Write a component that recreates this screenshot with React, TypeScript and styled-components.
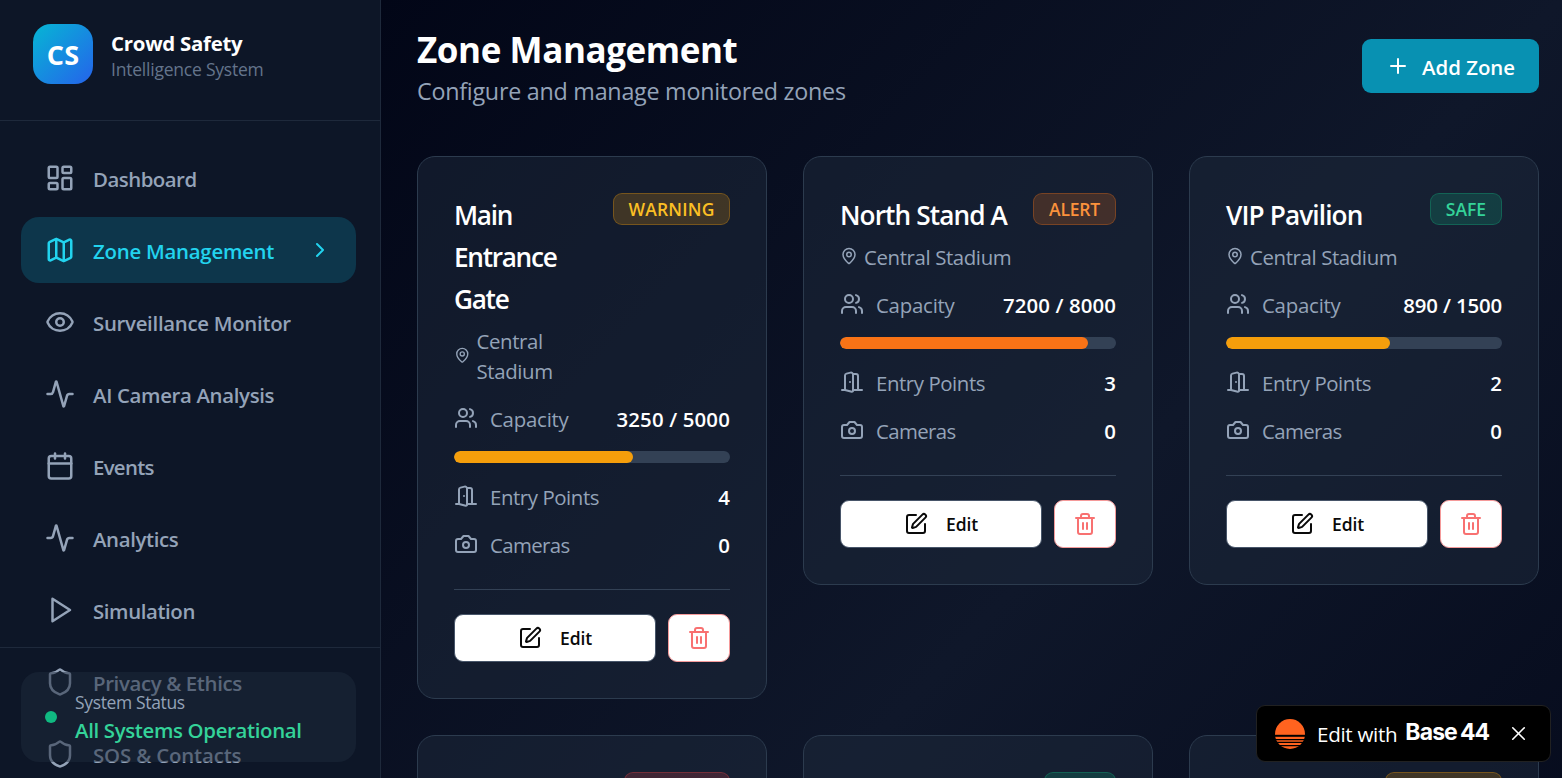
import React from "react";
import styled, { createGlobalStyle, css } from "styled-components";
import {
  Activity,
  Calendar,
  ChevronRight,
  Eye,
  LayoutDashboard,
  Map,
  Plus,
  Shield,
  SquarePen,
  Trash2,
  Users,
  X,
} from "lucide-react";

const GlobalStyle = createGlobalStyle`
  * {
    box-sizing: border-box;
  }
  body {
    margin: 0;
    overflow: hidden;
    background: #020617;
    font-family: "Open Sans", "Noto Sans", sans-serif;
  }
  svg {
    display: block;
  }
  button {
    font-family: inherit;
    margin: 0;
    cursor: pointer;
  }
`;

const Page = styled.div`
  position: relative;
  display: flex;
  width: 1562px;
  height: 778px;
  overflow: hidden;
`;

const Sidebar = styled.aside`
  position: relative;
  flex: none;
  width: 381px;
  height: 778px;
  overflow: hidden;
  background: #0d1627;
  border-right: 1px solid #1e293b;
`;

const Brand = styled.div`
  display: flex;
  align-items: center;
  gap: 18px;
  padding: 24px 24px 36px 33px;
  border-bottom: 1px solid #1e293b;
`;

const BrandMark = styled.div`
  display: flex;
  align-items: center;
  justify-content: center;
  width: 60px;
  height: 60px;
  border-radius: 18px;
  background: linear-gradient(to bottom right, #06b6d4, #2563eb);
  color: #fff;
  font-size: 27px;
  font-weight: 700;
  letter-spacing: 0.2px;
`;

const BrandName = styled.div`
  padding-top: 2px;
  color: #fff;
  font-size: 20.4px;
  line-height: 28px;
  font-weight: 700;
  letter-spacing: -0.25px;
`;

const BrandTagline = styled.div`
  padding-top: 1px;
  color: #64748b;
  font-size: 17.5px;
  line-height: 23px;
  letter-spacing: -0.22px;
`;

const Nav = styled.nav`
  display: flex;
  flex-direction: column;
  gap: 6px;
  padding: 24px 24px 0 21px;
`;

const NavItem = styled.a<{ $active?: boolean }>`
  display: flex;
  align-items: center;
  gap: 18px;
  height: 66px;
  padding: 0 24px;
  border-radius: 18px;
  color: #94a3b8;
  ${({ $active }) =>
    $active &&
    css`
      color: #22d3ee;
      background: #0d364b;
    `}
`;

const NavLabel = styled.span<{ $tracking?: number }>`
  flex: 1;
  padding-top: 2px;
  font-size: 20.4px;
  line-height: 28px;
  font-weight: 600;
  white-space: nowrap;
  letter-spacing: ${({ $tracking }) => $tracking ?? -0.3}px;
`;

const StatusArea = styled.div`
  position: absolute;
  left: 0;
  right: 0;
  bottom: 0;
  padding: 24px 24px 16px 21px;
  border-top: 1px solid #1e293b;
`;

const StatusCard = styled.div`
  display: flex;
  align-items: center;
  gap: 18px;
  height: 90px;
  padding: 0 24px;
  border-radius: 18px;
  background: rgba(30, 41, 59, 0.5);
`;

const StatusDot = styled.span`
  width: 12px;
  height: 12px;
  border-radius: 50%;
  background: #10b981;
`;

const StatusLabel = styled.div`
  padding-top: 1px;
  color: #94a3b8;
  font-size: 17.5px;
  line-height: 23px;
  letter-spacing: -0.35px;
`;

const StatusValue = styled.div`
  padding-top: 2px;
  color: #34d399;
  font-size: 20.4px;
  line-height: 28px;
  font-weight: 600;
  letter-spacing: -0.34px;
`;

const Main = styled.main`
  flex: none;
  width: 1181px;
  height: 1270px;
  padding: 24px 23px 0 36px;
  background: linear-gradient(to bottom right, #020617, #0f172a, #020617);
`;

const PageHeader = styled.header`
  display: flex;
  align-items: center;
  justify-content: space-between;
  margin-bottom: 48px;
`;

const PageTitle = styled.h1`
  margin: 0;
  padding-top: 3px;
  color: #fff;
  font-size: 35px;
  line-height: 45px;
  font-weight: 700;
  letter-spacing: -0.42px;
`;

const PageSubtitle = styled.p`
  margin: 0;
  padding-top: 3px;
  color: #94a3b8;
  font-size: 23.3px;
  line-height: 33px;
  letter-spacing: -0.25px;
`;

const AddButton = styled.button`
  display: flex;
  align-items: center;
  gap: 12px;
  width: 177px;
  height: 54px;
  padding: 0 0 0 24px;
  border: 0;
  border-radius: 9px;
  background: #0891b2;
  color: #fff;
  font-size: 20.4px;
  font-weight: 600;
  letter-spacing: 0;
  white-space: nowrap;

  span {
    padding-top: 2px;
  }
`;

const ZoneGrid = styled.section`
  display: grid;
  grid-template-columns: repeat(3, 1fr);
  gap: 36px;
  align-items: start;
`;

const Card = styled.article`
  min-height: 428px;
  padding: 36px;
  border: 1px solid #2c3b4e;
  border-radius: 18px;
  background: rgba(30, 41, 59, 0.5);
`;

const CardHeader = styled.div`
  display: flex;
  align-items: flex-start;
  justify-content: space-between;
  margin-bottom: 17px;
`;

const ZoneName = styled.h3<{ $tracking: number }>`
  margin: 0 0 6px;
  padding-top: 1px;
  color: #fff;
  font-size: 26.2px;
  line-height: 42px;
  font-weight: 600;
  letter-spacing: ${({ $tracking }) => $tracking}px;
`;

const Venue = styled.div`
  display: flex;
  align-items: center;
  gap: 6px;
  color: #94a3b8;
  font-size: 20.4px;
  line-height: 30px;
  letter-spacing: -0.38px;

  svg {
    flex: none;
    margin-top: -2px;
  }
`;

const badgeTones = {
  WARNING: { width: 117, rgb: "245, 158, 11", color: "#fbbf24", tracking: 0.2 },
  ALERT: { width: 83, rgb: "249, 115, 22", color: "#fb923c", tracking: -0.2 },
  SAFE: { width: 72, rgb: "16, 185, 129", color: "#34d399", tracking: 0 },
  CRITICAL: { width: 106, rgb: "239, 68, 68", color: "#f87171", tracking: 0 },
};

type Status = keyof typeof badgeTones;

const Badge = styled.span<{ $status: Status }>`
  flex: none;
  margin-left: auto;
  width: ${({ $status }) => badgeTones[$status].width}px;
  height: 32px;
  border: 1px solid rgba(${({ $status }) => badgeTones[$status].rgb}, 0.3);
  border-radius: 9px;
  background: rgba(${({ $status }) => badgeTones[$status].rgb}, 0.2);
  color: ${({ $status }) => badgeTones[$status].color};
  font-size: 17.5px;
  line-height: 31px;
  font-weight: 600;
  text-align: center;
  letter-spacing: ${({ $status }) => badgeTones[$status].tracking}px;
`;

const Stats = styled.div`
  display: flex;
  flex-direction: column;
  gap: 18px;
`;

const StatRow = styled.div`
  display: flex;
  align-items: center;
  gap: 12px;
  height: 30px;
  color: #94a3b8;
  font-size: 20.4px;
`;

const StatLabel = styled.span<{ $tracking: number }>`
  flex: 1;
  padding-top: 2px;
  letter-spacing: ${({ $tracking }) => $tracking}px;
`;

const StatValue = styled.span<{ $tracking?: number }>`
  padding-top: 2px;
  color: #fff;
  font-weight: 600;
  letter-spacing: ${({ $tracking }) => $tracking ?? 0}px;
`;

const Track = styled.div`
  height: 12px;
  border-radius: 6px;
  background: #334155;
  overflow: hidden;
`;

const Fill = styled.div<{ $color: string }>`
  height: 12px;
  border-radius: 6px;
  background: ${({ $color }) => $color};
`;

const CardActions = styled.div`
  display: flex;
  gap: 12px;
  margin-top: 30px;
  padding-top: 24px;
  border-top: 1px solid #334155;
`;

const EditButton = styled.button`
  display: flex;
  flex: 1;
  align-items: center;
  justify-content: center;
  gap: 18px;
  height: 48px;
  padding: 0;
  border: 1px solid #475569;
  border-radius: 9px;
  background: #fff;
  color: #0a0a0a;
  font-size: 17.5px;
  font-weight: 600;
  letter-spacing: -0.15px;
`;

const DeleteButton = styled.button`
  display: flex;
  align-items: center;
  justify-content: center;
  width: 62px;
  height: 48px;
  padding: 0;
  border: 1px solid #f59a9a;
  border-radius: 9px;
  background: #fff;
  color: #f87171;
`;

const EditBar = styled.div`
  position: absolute;
  right: 11px;
  bottom: 16px;
  display: flex;
  align-items: center;
  width: 295px;
  height: 57px;
  padding: 0 20px 0 18px;
  border: 1px solid #212121;
  border-radius: 9px;
  background: #000;
  color: #fff;
`;

const EditBarText = styled.span`
  margin-left: 12px;
  font-size: 20.6px;
  letter-spacing: -0.3px;
`;

const EditBarBrand = styled.span`
  flex: 1;
  margin-left: 8px;
  padding-bottom: 3px;
  font-family: Inter, sans-serif;
  font-size: 23px;
  font-weight: 700;
  letter-spacing: -0.9px;
  word-spacing: -1.5px;
  white-space: nowrap;
`;

const Outline: React.FC<{ size: number; children: React.ReactNode }> = ({
  size,
  children,
}) => (
  <svg
    width={size}
    height={size}
    viewBox="0 0 24 24"
    fill="none"
    stroke="currentColor"
    strokeWidth="2"
    strokeLinecap="round"
    strokeLinejoin="round"
  >
    {children}
  </svg>
);

const PlayIcon = ({ size = 24 }: { size?: number }) => (
  <Outline size={size}>
    <polygon points="6 3 20 12 6 21 6 3" />
  </Outline>
);

const PinIcon = ({ size = 24 }: { size?: number }) => (
  <Outline size={size}>
    <path d="M20 10c0 4.993-5.539 10.193-7.399 11.799a1 1 0 0 1-1.202 0C9.539 20.193 4 14.993 4 10a8 8 0 0 1 16 0" />
    <circle cx="12" cy="10" r="3" />
  </Outline>
);

const DoorIcon = () => (
  <Outline size={24}>
    <path d="M13 4h3a2 2 0 0 1 2 2v14" />
    <path d="M2 20h3" />
    <path d="M13 20h9" />
    <path d="M10 12v.01" />
    <path d="M13 4.562v16.157a1 1 0 0 1-1.242.97L5 20V5.562a2 2 0 0 1 1.515-1.94l4-1A2 2 0 0 1 13 4.561Z" />
  </Outline>
);

const CameraIcon = () => (
  <Outline size={24}>
    <path d="M14.5 4h-5L7 7H4a2 2 0 0 0-2 2v9a2 2 0 0 0 2 2h16a2 2 0 0 0 2-2V9a2 2 0 0 0-2-2h-3l-2.5-3z" />
    <circle cx="12" cy="13" r="3" />
  </Outline>
);

const SunLogo = () => (
  <svg width="30" height="30" viewBox="0 0 30 30">
    <circle cx="15" cy="15" r="15" fill="#ff631f" />
    <path d="M0 16.8h30" stroke="#000" strokeWidth="2" />
    <path d="M0 20.6h30M0 23.4h30M0 26.6h30" stroke="#000" strokeWidth="1.2" />
  </svg>
);

const navItems = [
  { label: "Dashboard", icon: LayoutDashboard, tracking: -0.5 },
  { label: "Zone Management", icon: Map, tracking: -0.25, active: true },
  { label: "Surveillance Monitor", icon: Eye },
  { label: "AI Camera Analysis", icon: Activity, tracking: -0.34 },
  { label: "Events", icon: Calendar, tracking: -0.7 },
  { label: "Analytics", icon: Activity, tracking: -0.36 },
  { label: "Simulation", icon: PlayIcon, tracking: -0.4 },
  { label: "Privacy & Ethics", icon: Shield, tracking: -0.36 },
  { label: "SOS & Contacts", icon: Shield, tracking: -0.15 },
];

interface Zone {
  name: string;
  tracking: number;
  status: Status;
  current: number;
  capacity: number;
  barColor: string;
  entryPoints: number;
  cameras: number;
  valueTracking: number;
  pinSize: number;
}

const zones: Zone[] = [
  {
    name: "Main Entrance Gate",
    tracking: -1.3,
    status: "WARNING",
    current: 3250,
    capacity: 5000,
    barColor: "#f59e0b",
    entryPoints: 4,
    cameras: 0,
    valueTracking: 0.15,
    pinSize: 16.5,
  },
  {
    name: "North Stand A",
    tracking: -0.9,
    status: "ALERT",
    current: 7200,
    capacity: 8000,
    barColor: "#f97316",
    entryPoints: 3,
    cameras: 0,
    valueTracking: 0.1,
    pinSize: 18,
  },
  {
    name: "VIP Pavilion",
    tracking: -0.88,
    status: "SAFE",
    current: 890,
    capacity: 1500,
    barColor: "#f59e0b",
    entryPoints: 2,
    cameras: 0,
    valueTracking: -0.15,
    pinSize: 18,
  },
];

const nextRow: Status[] = ["CRITICAL", "SAFE", "WARNING"];

const ZoneCard: React.FC<{ zone: Zone }> = ({ zone }) => (
  <Card>
    <CardHeader>
      <div>
        <ZoneName $tracking={zone.tracking}>{zone.name}</ZoneName>
        <Venue>
          <PinIcon size={zone.pinSize} />
          <span>Central Stadium</span>
        </Venue>
      </div>
      <Badge $status={zone.status}>{zone.status}</Badge>
    </CardHeader>
    <Stats>
      <StatRow>
        <Users size={24} />
        <StatLabel $tracking={-0.22}>Capacity</StatLabel>
        <StatValue $tracking={zone.valueTracking}>
          {zone.current} / {zone.capacity}
        </StatValue>
      </StatRow>
      <Track>
        <Fill
          $color={zone.barColor}
          style={{ width: `${(zone.current / zone.capacity) * 100}%` }}
        />
      </Track>
      <StatRow>
        <DoorIcon />
        <StatLabel $tracking={-0.42}>Entry Points</StatLabel>
        <StatValue>{zone.entryPoints}</StatValue>
      </StatRow>
      <StatRow>
        <CameraIcon />
        <StatLabel $tracking={-0.6}>Cameras</StatLabel>
        <StatValue>{zone.cameras}</StatValue>
      </StatRow>
    </Stats>
    <CardActions>
      <EditButton>
        <SquarePen size={24} />
        Edit
      </EditButton>
      <DeleteButton>
        <Trash2 size={24} />
      </DeleteButton>
    </CardActions>
  </Card>
);

const App: React.FC = () => {
  return (
    <>
      <GlobalStyle />
      <Page>
        <Sidebar>
          <Brand>
            <BrandMark>CS</BrandMark>
            <div>
              <BrandName>Crowd Safety</BrandName>
              <BrandTagline>Intelligence System</BrandTagline>
            </div>
          </Brand>
          <Nav>
            {navItems.map(({ label, icon: Icon, tracking, active }) => (
              <NavItem key={label} $active={active}>
                <Icon size={30} />
                <NavLabel $tracking={tracking}>{label}</NavLabel>
                {active && <ChevronRight size={24} />}
              </NavItem>
            ))}
          </Nav>
          <StatusArea>
            <StatusCard>
              <StatusDot />
              <div>
                <StatusLabel>System Status</StatusLabel>
                <StatusValue>All Systems Operational</StatusValue>
              </div>
            </StatusCard>
          </StatusArea>
        </Sidebar>
        <Main>
          <PageHeader>
            <div>
              <PageTitle>Zone Management</PageTitle>
              <PageSubtitle>Configure and manage monitored zones</PageSubtitle>
            </div>
            <AddButton>
              <Plus size={24} />
              <span>Add Zone</span>
            </AddButton>
          </PageHeader>
          <ZoneGrid>
            {zones.map((zone) => (
              <ZoneCard key={zone.name} zone={zone} />
            ))}
            {nextRow.map((status) => (
              <Card key={status}>
                <CardHeader>
                  <Badge $status={status} />
                </CardHeader>
              </Card>
            ))}
          </ZoneGrid>
        </Main>
        <EditBar>
          <SunLogo />
          <EditBarText>Edit with</EditBarText>
          <EditBarBrand>Base 44</EditBarBrand>
          <X size={23} strokeWidth={1.7} />
        </EditBar>
      </Page>
    </>
  );
};

export default App;
